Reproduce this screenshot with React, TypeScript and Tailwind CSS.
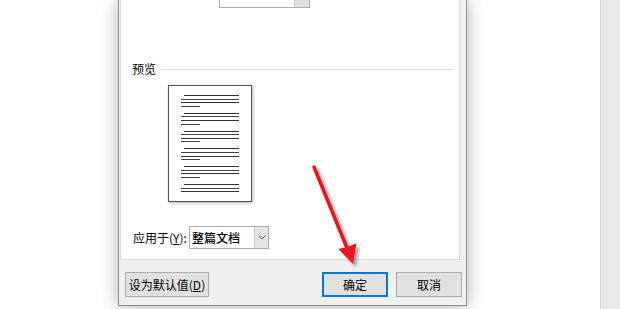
import React from 'react';

const font = { fontFamily: '"Noto Sans CJK SC", "Noto Sans", sans-serif' };

// one block of text lines on the preview page
const lineGroups = [0, 1, 2, 3, 4, 5];

const PreviewPage = () => (
  <div className="ml-[47px] mt-[8px] w-[84px] h-[117px] bg-white border border-[#555] shadow-[1px_1px_3px_rgba(0,0,0,0.3)] pt-[9px] flex flex-col gap-[6px]">
    {lineGroups.map((g) => (
      <div key={g} className="flex flex-col gap-[2.6px]">
        <div className="ml-[15px] w-[55px] h-px bg-[#333]" />
        <div className="ml-[12px] w-[58px] h-px bg-[#444]" />
        <div className="ml-[12px] w-[58px] h-px bg-[#333]" />
        {g < 5 && <div className="ml-[12px] w-[19px] h-px bg-[#444]" />}
      </div>
    ))}
  </div>
);

const Btn = ({ children, primary, className = '' }: { children: React.ReactNode; primary?: boolean; className?: string }) => (
  <div
    className={`h-[25px] flex items-center justify-center bg-[#e1e1e1] text-[12px] text-black ${
      primary ? 'border-2 border-[#0078d7]' : 'border border-[#adadad]'
    } ${className}`}
  >
    {children}
  </div>
);

export default function App() {
  return (
    <div className="relative w-[620px] h-[309px] bg-white overflow-hidden flex" style={font}>
      {/* dialog */}
      <div className="ml-[118px] w-[349px] h-[306px] bg-[#f0f0f0] border-x border-b border-[#8f8f8f] shadow-[0_0_16px_rgba(0,0,0,0.32)] flex flex-col">
        <div className="ml-px w-[340px] h-[260px] bg-white border-l border-r border-b border-[#dadada] flex flex-col">
          {/* combobox cut off at the top */}
          <div className="ml-[98px] mt-[-15px] w-[91px] h-[23px] border border-[#adadad] bg-white flex justify-end">
            <div className="w-[15px] h-full bg-[#e1e1e1] border-l border-[#c8c8c8]" />
          </div>

          <div className="mt-[53px] h-[16px] flex items-center">
            <span className="ml-[11px] text-[12px] leading-none text-black">预览</span>
            <div className="ml-[5px] mr-[5px] flex-1 h-px bg-[#dcdcdc]" />
          </div>

          <PreviewPage />

          <div className="mt-[24px] h-[23px] flex items-center">
            <span className="ml-[12px] w-[56px] text-[12px] text-black">
              应用于(<span className="underline">Y</span>):
            </span>
            <div className="w-[80px] h-[23px] border border-[#adadad] bg-white flex items-center">
              <span className="ml-[2px] flex-1 text-[12px] font-medium text-black">整篇文档</span>
              <div className="w-[14px] h-full bg-[#e5e5e5] border-l border-[#c8c8c8] flex items-center justify-center">
                <svg width="8" height="5" viewBox="0 0 8 5">
                  <path d="M0.5 0.5 L4 4 L7.5 0.5" fill="none" stroke="#606060" strokeWidth="1" />
                </svg>
              </div>
            </div>
          </div>
        </div>

        <div className="mt-[12px] pl-[6px] pr-[4px] flex items-center">
          <Btn className="w-[84px]">
            设为默认值(<span className="underline">D</span>)
          </Btn>
          <Btn primary className="ml-auto w-[66px]">确定</Btn>
          <Btn className="ml-[8px] w-[66px]">取消</Btn>
        </div>
      </div>

      <div className="flex-1" />
      {/* neighbouring panel edge on the right */}
      <div className="w-[20px] h-full bg-[#e8e8e8] border-l border-[#d6d6d6]" />

      {/* red annotation arrow */}
      <svg className="absolute left-0 top-0 pointer-events-none" width="620" height="309">
        <defs>
          <filter id="sh" x="-50%" y="-50%" width="200%" height="200%">
            <feDropShadow dx="3" dy="3" stdDeviation="1.8" floodColor="#000" floodOpacity="0.35" />
          </filter>
        </defs>
        <g filter="url(#sh)">
          <line x1="314" y1="167" x2="347" y2="248" stroke="#e8141b" strokeWidth="3.5" strokeLinecap="round" />
          <polygon points="353,264 338.5,249 347,247 356.5,243.5" fill="#e8141b" />
        </g>
      </svg>
    </div>
  );
}
